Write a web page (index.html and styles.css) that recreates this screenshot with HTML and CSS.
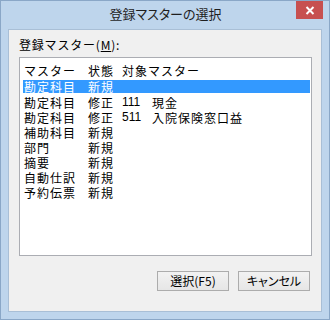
FILE: index.html
```html
<!DOCTYPE html>
<html lang="ja">
<head>
    <meta charset="UTF-8">
    <meta name="viewport" content="width=device-width, initial-scale=1.0">
    <title>登録マスターの選択</title>
    <link rel="stylesheet" href="styles.css">
</head>
<body>
    <div class="windowCls">
        <div class="titleBarCls">
            <span></span>
            <span class="titleTextCls">登録マスターの選択</span>
            <button class="closeBtnCls" title="閉じる">
                <svg width="10" height="9" viewBox="0 0 10 9">
                    <path d="M1.5 1 L8.5 8 M8.5 1 L1.5 8" stroke="#fff" stroke-width="2" fill="none"/>
                </svg>
            </button>
        </div>
        <div class="clientCls">
            <label class="fieldLabelCls">登録マスター(<u>M</u>):</label>
            <div class="listBoxCls">
                <div class="rowCls headerRowCls">
                    <span>マスター</span>
                    <span>状態</span>
                    <span class="spanTwoCls">対象マスター</span>
                </div>
                <div class="rowCls selectedRowCls">
                    <span>勘定科目</span><span>新規</span><span></span><span></span>
                </div>
                <div class="rowCls">
                    <span>勘定科目</span><span>修正</span><span class="numCls">111</span><span>現金</span>
                </div>
                <div class="rowCls">
                    <span>勘定科目</span><span>修正</span><span class="numCls">511</span><span>入院保険窓口益</span>
                </div>
                <div class="rowCls">
                    <span>補助科目</span><span>新規</span><span></span><span></span>
                </div>
                <div class="rowCls">
                    <span>部門</span><span>新規</span><span></span><span></span>
                </div>
                <div class="rowCls">
                    <span>摘要</span><span>新規</span><span></span><span></span>
                </div>
                <div class="rowCls">
                    <span>自動仕訳</span><span>新規</span><span></span><span></span>
                </div>
                <div class="rowCls">
                    <span>予約伝票</span><span>新規</span><span></span><span></span>
                </div>
            </div>
            <div class="buttonBarCls">
                <button class="btn">選択(F5)</button>
                <button class="btn">キャンセル</button>
            </div>
        </div>
    </div>
</body>
</html>
```
FILE: styles.css
```css
*{margin:0px;padding:0px;box-sizing:border-box;}
body{width:330px;height:320px;background:#fff;font-family:"Noto Sans CJK JP","Noto Sans",sans-serif;}
.windowCls{width:330px;height:320px;display:flex;flex-direction:column;background-color:#bed5ec;border:1px solid #8aa7c7;}
.titleBarCls{height:28px;display:grid;grid-template-columns:1fr auto 1fr;align-items:start;padding:0px 6px 0px 7px;}
.titleTextCls{font-size:13px;line-height:16px;margin-top:5px;color:#1e1e1e;font-feature-settings:"palt";}
.closeBtnCls{justify-self:end;width:27px;height:18px;border:none;background-color:#c75050;display:flex;justify-content:center;align-items:center;outline:none;}
.clientCls{flex:1;margin:0px 7px 7px 7px;background-color:#f0f0f0;border:1px solid #a9bfd6;display:flex;flex-direction:column;padding:7px 9px 0px 10px;}
.fieldLabelCls{font-size:12px;line-height:16px;color:#000;letter-spacing:0.8px;}
.fieldLabelCls u{text-underline-offset:1px;}
.listBoxCls{margin-top:4px;height:199px;background-color:#fff;border:1px solid #abadb3;padding:6px 1px 0px 3px;font-size:12px;color:#000;letter-spacing:1px;}
.rowCls{display:grid;grid-template-columns:64px 34px 30px 1fr;height:15px;line-height:15px;padding-left:1px;white-space:nowrap;}
.headerRowCls{height:16px;line-height:14px;}
.spanTwoCls{grid-column:span 2;}
.selectedRowCls{background-color:#3399ff;color:#fff;height:13px;line-height:13px;margin-bottom:2px;}
.numCls{letter-spacing:0px;font-family:"Liberation Sans",sans-serif;}
.buttonBarCls{display:flex;justify-content:flex-end;gap:9px;margin-top:15px;padding-right:2px;}
.btn{width:72px;height:20px;font-family:"Noto Sans CJK JP",sans-serif;font-size:12px;line-height:16px;color:#000;background:linear-gradient(#f2f2f2,#e6e6e6);border:1px solid #acacac;outline:none;font-feature-settings:"palt";}
```
